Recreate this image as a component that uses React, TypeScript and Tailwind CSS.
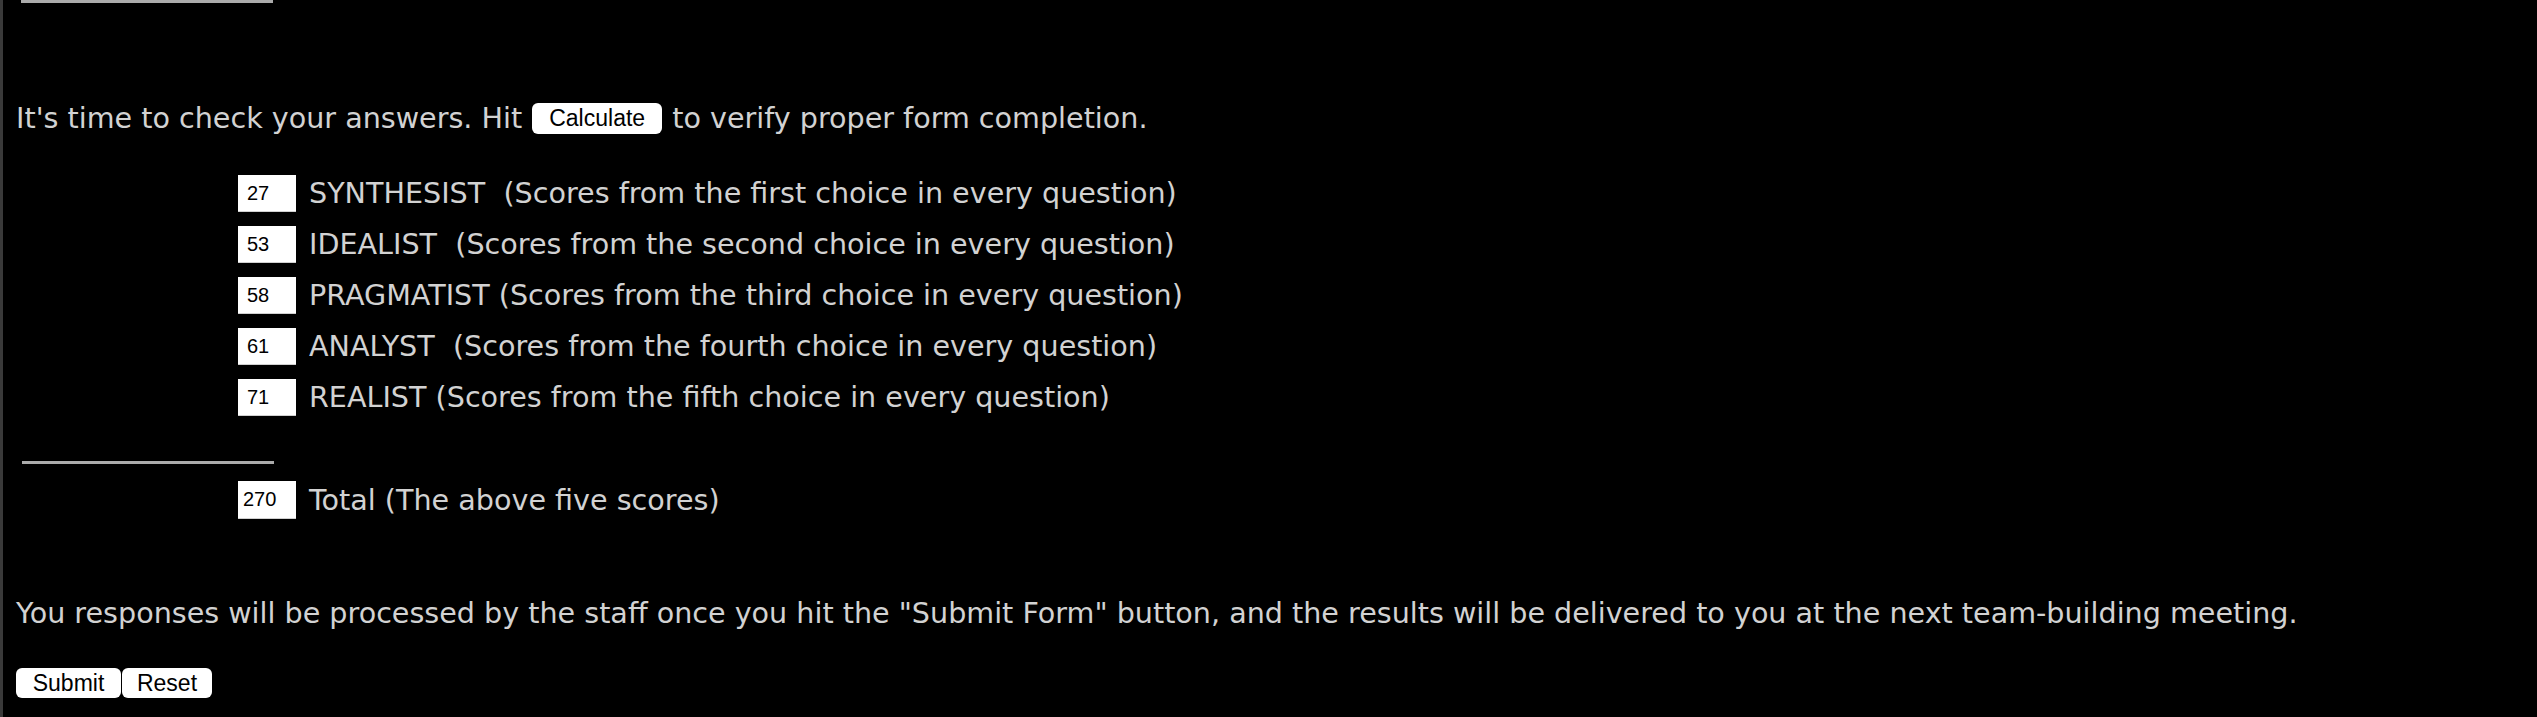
import * as React from "react";

const scores = [
  { value: "27", name: "SYNTHESIST", gap: "\u00a0 ", note: "(Scores from the first choice in every question)" },
  { value: "53", name: "IDEALIST", gap: "\u00a0 ", note: "(Scores from the second choice in every question)" },
  { value: "58", name: "PRAGMATIST", gap: " ", note: "(Scores from the third choice in every question)" },
  { value: "61", name: "ANALYST", gap: "\u00a0 ", note: "(Scores from the fourth choice in every question)" },
  { value: "71", name: "REALIST", gap: " ", note: "(Scores from the fifth choice in every question)" },
];

function ScoreBox({ value, className = "" }: { value: string; className?: string }) {
  return (
    <input
      readOnly
      value={value}
      className={`h-[37px] w-[58px] shrink-0 border-b border-[#d0d0d0] bg-white text-[20px] text-black outline-none font-['Liberation_Sans',Arial,sans-serif] ${className}`}
    />
  );
}

function PillButton({ children, className = "" }: { children: React.ReactNode; className?: string }) {
  return (
    <button
      type="button"
      className={`flex items-center justify-center rounded-[6px] bg-white text-[23px] text-black font-['Liberation_Sans',Arial,sans-serif] ${className}`}
    >
      {children}
    </button>
  );
}

export default function App() {
  return (
    <div className="h-[717px] overflow-hidden border-l-[3px] border-[#3a3a3a] bg-black text-[28.6px] leading-none text-[#d2d2d2] font-['DejaVu_Sans',sans-serif]">
      <div className="ml-[18px] h-[3px] w-[252px] bg-[#ababab]" />

      <div className="mt-[100px] flex h-[31px] items-center pl-[13px] whitespace-nowrap">
        <span>It's time to check your answers. Hit</span>
        <PillButton className="mx-[10px] h-[31px] w-[130px]">Calculate</PillButton>
        <span>to verify proper form completion.</span>
      </div>

      <div className="mt-[34px] flex flex-col">
        {scores.map((s) => (
          <div key={s.name} className="flex h-[51px] items-center pl-[235px] whitespace-pre">
            <ScoreBox value={s.value} className="pl-[9px]" />
            <span className="ml-[13px]">
              {s.name}
              {s.gap}
              {s.note}
            </span>
          </div>
        ))}
      </div>

      <div className="ml-[19px] mt-[38px] h-[3px] w-[252px] bg-[#ababab]" />

      <div className="mt-[17px] flex h-[38px] items-center pl-[235px]">
        <ScoreBox value="270" className="h-[38px] pl-[5px]" />
        <span className="ml-[13px]">Total (The above five scores)</span>
      </div>

      <p className="mt-[77px] flex h-[34px] items-center pl-[13px] whitespace-nowrap">
        You responses will be processed by the staff once you hit the "Submit Form" button, and the results will be delivered to you at the next team-building meeting.
      </p>

      <div className="mt-[38px] flex gap-[1px] pl-[13px]">
        <PillButton className="h-[30px] w-[105px]">Submit</PillButton>
        <PillButton className="h-[30px] w-[90px]">Reset</PillButton>
      </div>
    </div>
  );
}
